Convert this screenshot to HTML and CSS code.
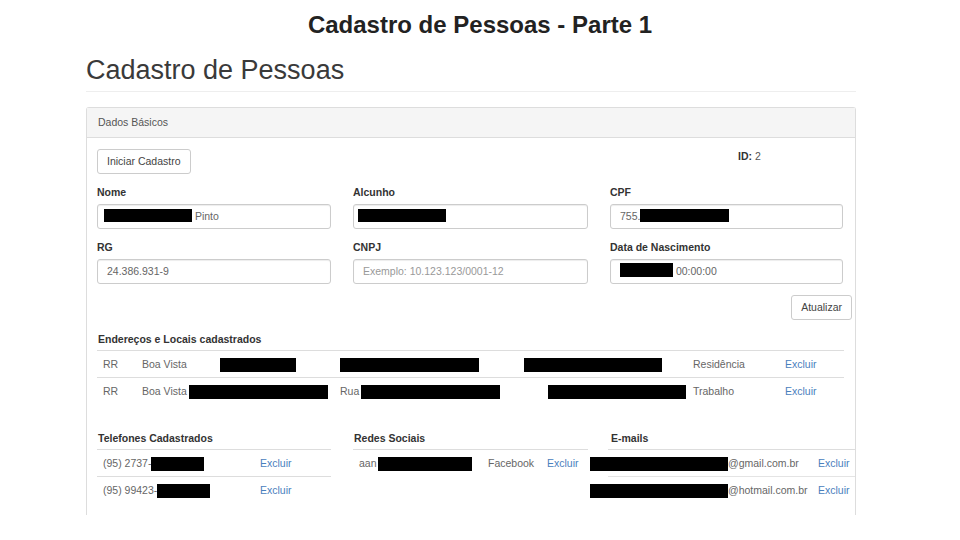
FILE: index.html
```html
<!DOCTYPE html>
<html lang="pt-BR">
<head>
<meta charset="utf-8">
<title>Cadastro de Pessoas - Parte 1</title>
<link rel="stylesheet" href="styles.css">
</head>
<body>
<h2 class="slide-title">Cadastro de Pessoas - Parte 1</h2>
<div class="page">
  <h1 class="page-title">Cadastro de Pessoas</h1>
  <hr class="divider">
  <div class="panel">
    <div class="panel-heading">Dados Básicos</div>
    <div class="panel-body">
      <div class="grid3 toolbar">
        <span class="btn">Iniciar Cadastro</span>
        <div class="record-id"><b>ID:</b> 2</div>
      </div>
      <div class="grid3 fields">
        <div class="field">
          <label>Nome</label>
          <div class="input"><span class="redact w88 pull3"></span> Pinto</div>
        </div>
        <div class="field">
          <label>Alcunho</label>
          <div class="input"><span class="redact w88 pull5"></span></div>
        </div>
        <div class="field">
          <label>CPF</label>
          <div class="input">755.<span class="redact w89"></span></div>
        </div>
        <div class="field">
          <label>RG</label>
          <div class="input">24.386.931-9</div>
        </div>
        <div class="field">
          <label>CNPJ</label>
          <div class="input placeholder">Exemplo: 10.123.123/0001-12</div>
        </div>
        <div class="field">
          <label>Data de Nascimento</label>
          <div class="input"><span class="redact w53 tall"></span> 00:00:00</div>
        </div>
      </div>
      <div class="actions"><span class="btn">Atualizar</span></div>

      <div class="section-title">Endereços e Locais cadastrados</div>
      <div class="addr-table">
        <div class="trow addr-row">
          <div class="cell">RR</div>
          <div class="cell">Boa Vista</div>
          <div class="cell"><span class="redact w76"></span></div>
          <div class="cell"><span class="redact w139"></span></div>
          <div class="cell"><span class="redact w138"></span></div>
          <div class="cell">Residência</div>
          <div class="cell"><span class="link">Excluir</span></div>
        </div>
        <div class="trow addr-row">
          <div class="cell">RR</div>
          <div class="cell span2">Boa Vista<span class="redact w139 gap2"></span></div>
          <div class="cell">Rua<span class="redact w139 gap2"></span></div>
          <div class="cell"><span class="redact w138 push24"></span></div>
          <div class="cell">Trabalho</div>
          <div class="cell"><span class="link">Excluir</span></div>
        </div>
      </div>

      <div class="grid3 lists">
        <div class="list">
          <div class="section-title flush">Telefones Cadastrados</div>
          <div class="phone-table">
            <div class="trow phone-row">
              <div class="cell">(95) 2737-<span class="redact w53"></span></div>
              <div class="cell"><span class="link">Excluir</span></div>
            </div>
            <div class="trow phone-row">
              <div class="cell">(95) 99423-<span class="redact w53"></span></div>
              <div class="cell"><span class="link">Excluir</span></div>
            </div>
          </div>
        </div>
        <div class="list">
          <div class="section-title flush">Redes Sociais</div>
          <div class="social-table">
            <div class="trow social-row">
              <div class="cell">aan<span class="redact w94 gap1"></span></div>
              <div class="cell">Facebook</div>
              <div class="cell"><span class="link">Excluir</span></div>
            </div>
          </div>
        </div>
        <div class="list">
          <div class="section-title flush">E-mails</div>
          <div class="mail-table">
            <div class="trow mail-row">
              <div class="cell"><span class="redact w138 pull24"></span>@gmail.com.br</div>
              <div class="cell"><span class="link">Excluir</span></div>
            </div>
            <div class="trow mail-row">
              <div class="cell"><span class="redact w138 pull24"></span>@hotmail.com.br</div>
              <div class="cell"><span class="link">Excluir</span></div>
            </div>
          </div>
        </div>
      </div>
    </div>
  </div>
</div>
</body>
</html>
```
FILE: styles.css
```css
html, body {
  margin: 0;
  padding: 0;
}
body {
  width: 960px;
  height: 540px;
  overflow: hidden;
  background: #fff;
  color: #333;
  font-family: "Liberation Sans", Arial, sans-serif;
}
.slide-title {
  margin: 0;
  padding-top: 11px;
  text-align: center;
  font-size: 24px;
  line-height: 28px;
  font-weight: bold;
  color: #222;
}
.page {
  margin: 16px 0 0 86px;
  width: 770px;
}
.page-title {
  margin: 0;
  font-size: 27px;
  line-height: 30px;
  font-weight: normal;
  color: #3a3a3a;
}
.divider {
  margin: 6px 0 15px;
  height: 0;
  border: 0;
  border-top: 1px solid #eee;
}
.panel {
  border: 1px solid #ddd;
  border-bottom: none;
  border-radius: 3px 3px 0 0;
  font-size: 10.5px;
}
.panel-heading {
  background: #f5f5f5;
  border-bottom: 1px solid #ddd;
  padding: 7px 11px;
  line-height: 15px;
  color: #555;
}
.panel-body {
  padding: 11px 12px 12px 10px;
}
.btn {
  display: inline-block;
  box-sizing: border-box;
  height: 25px;
  padding: 0 9px;
  line-height: 23px;
  border: 1px solid #ccc;
  border-radius: 3px;
  background: #fff;
  color: #444;
  white-space: nowrap;
}
.grid3 {
  display: grid;
  grid-template-columns: 234px 235px 233px;
  column-gap: 22px;
}
.toolbar {
  align-items: start;
}
.toolbar .btn {
  justify-self: start;
}
.record-id {
  grid-column: 3;
  padding-left: 128px;
  line-height: 15px;
  color: #555;
}
.record-id b {
  color: #333;
}
.fields {
  margin-top: 11px;
  row-gap: 11px;
}
.field label {
  display: block;
  font-weight: bold;
  line-height: 15px;
  margin-bottom: 4px;
  color: #333;
}
.input {
  box-sizing: border-box;
  height: 25px;
  padding: 0 9px;
  line-height: 23px;
  border: 1px solid #ccc;
  border-radius: 3px;
  box-shadow: inset 0 1px 1px rgba(0, 0, 0, 0.075);
  color: #666;
  white-space: nowrap;
  overflow: hidden;
}
.placeholder {
  color: #999;
}
.actions {
  display: flex;
  justify-content: flex-end;
  margin-top: 11px;
  margin-right: -9px;
}
.section-title {
  font-weight: bold;
  line-height: 15px;
  margin: 12px 0 3px 1px;
  color: #333;
}
.section-title.flush {
  margin: 1px 0 3px 1px;
}
.trow {
  display: grid;
  border-top: 1px solid #ddd;
}
.cell {
  padding: 6px 6px 5px;
  line-height: 15px;
  white-space: nowrap;
  color: #666;
}
.span2 {
  grid-column: span 2;
}
.link {
  color: #4a80bd;
}
.addr-table {
  width: 747px;
}
.addr-row {
  grid-template-columns: 39px 78px 120px 184px 169px 92px 65px;
}
.lists {
  margin-top: 26px;
}
.phone-row {
  grid-template-columns: 157px 77px;
}
.social-row {
  grid-template-columns: 129px 59px 47px;
}
.mail-table {
  width: 247px;
  margin-left: -2px;
}
.mail-row {
  grid-template-columns: 204px 43px;
}
.mail-row + .mail-row {
  border-top-color: #e4e4e4;
}
.redact {
  display: inline-block;
  height: 14px;
  vertical-align: -4px;
  background: #000;
}
.input .redact {
  height: 13px;
  vertical-align: -2px;
}
.input .redact.tall {
  height: 14px;
  vertical-align: -2px;
}
.w53 { width: 53px; }
.w76 { width: 76px; }
.w88 { width: 88px; }
.w89 { width: 89px; }
.w94 { width: 94px; }
.w138 { width: 138px; }
.w139 { width: 139px; }
.pull3 { margin-left: -3px; }
.pull5 { margin-left: -5px; }
.pull24 { margin-left: -24px; }
.gap1 { margin-left: 1px; }
.gap2 { margin-left: 2px; }
.push24 { margin-left: 24px; }
```
